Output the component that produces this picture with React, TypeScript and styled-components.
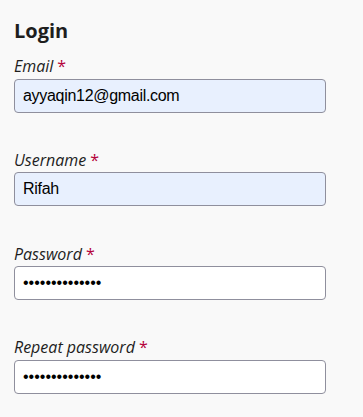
import React from "react";
import styled, { createGlobalStyle } from "styled-components";

const Global = createGlobalStyle`
  html, body { margin: 0; padding: 0; background: #f9f9f9; }
  body { font-family: "Open Sans", "Liberation Sans", sans-serif; color: #1e1e1e; }
`;

const Page = styled.form`
  padding: 17px 14px 0 14px;
  display: flex;
  flex-direction: column;
`;

const Title = styled.h2`
  margin: 0 0 11px 0;
  font-family: "Open Sans", sans-serif;
  font-weight: 700;
  font-size: 20px;
  line-height: 27px;
  color: #1e1e1e;
`;

const Field = styled.div`
  display: flex;
  flex-direction: column;
  margin-bottom: 36.3px;
`;

const Label = styled.label`
  font-family: "Open Sans", sans-serif;
  font-style: italic;
  font-size: 16px;
  line-height: 22px;
  color: #1e1e1e;
  margin-bottom: 1.5px;
`;

const Required = styled.span`
  color: #b5003a;
  font-style: normal;
  margin-left: 4px;
`;

const Input = styled.input<{ $filled?: boolean }>`
  box-sizing: border-box;
  width: 312px;
  height: 34px;
  margin: 0;
  padding: 0 8px;
  border: 1px solid #8f8f9d;
  border-radius: 4px;
  background: ${(p) => (p.$filled ? "#e8f0fe" : "#ffffff")};
  font-family: "Liberation Sans", Arial, sans-serif;
  font-size: 16px;
  letter-spacing: ${(p) => (p.type === "password" ? "0" : "-0.3px")};
  color: #000;
  outline: none;
`;

const fields = [
  { label: "Email", type: "text", value: "ayyaqin12@gmail.com", filled: true },
  { label: "Username", type: "text", value: "Rifah", filled: true },
  { label: "Password", type: "password", value: "Rifah123456789", filled: false },
  { label: "Repeat password", type: "password", value: "Rifah123456789", filled: false },
];

export default function App() {
  return (
    <>
      <Global />
      <Page onSubmit={(e) => e.preventDefault()}>
        <Title>Login</Title>
        {fields.map((f) => (
          <Field key={f.label}>
            <Label>
              {f.label}
              <Required>*</Required>
            </Label>
            <Input type={f.type} defaultValue={f.value} $filled={f.filled} readOnly />
          </Field>
        ))}
      </Page>
    </>
  );
}
